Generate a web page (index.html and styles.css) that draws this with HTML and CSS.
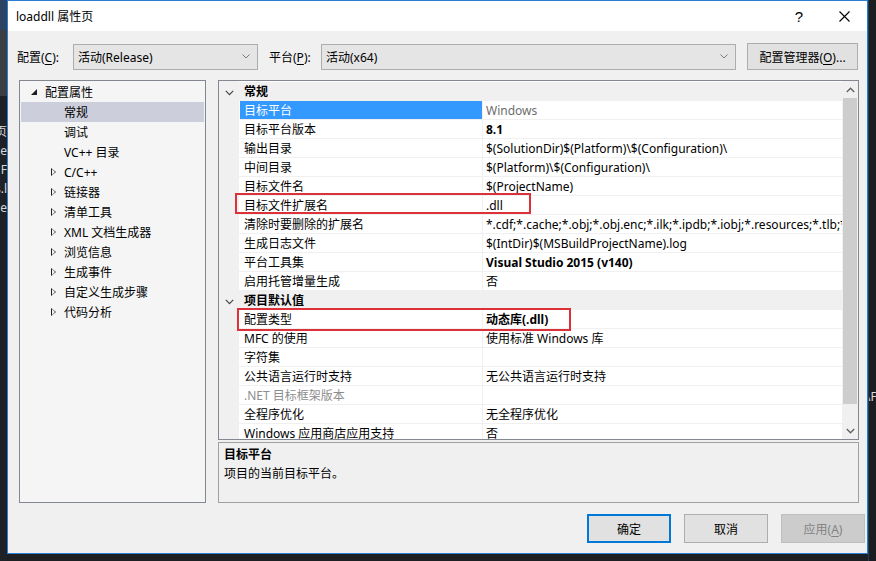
FILE: index.html
```html
<!DOCTYPE html>
<html lang="zh-CN">

<head>
    <meta charset="UTF-8">
    <meta name="viewport" content="width=device-width, initial-scale=1.0">
    <title>loaddll 属性页</title>
    <link rel="stylesheet" href="styles.css">
</head>

<body>
    <div class="screen">
        <div class="backdrop-left">
            <div class="backdrop-top"></div>
            <div class="backdrop-text">
                <span>页</span>
                <span>le</span>
                <span>F</span>
                <span>s.l</span>
                <span>e</span>
            </div>
        </div>

        <div class="dialog">
            <header class="titlebar">
                <span class="title">loaddll 属性页</span>
                <span class="tb-btn help">?</span>
                <span class="tb-btn close">
                    <svg width="11" height="11" viewBox="0 0 11 11"><path d="M0.5 0.5 L10.5 10.5 M10.5 0.5 L0.5 10.5" stroke="#000" stroke-width="1.1" fill="none"/></svg>
                </span>
            </header>

            <div class="config-row">
                <span class="label lbl-config">配置(<u>C</u>):</span>
                <div class="combo combo-config">
                    <span>活动(Release)</span>
                    <svg width="8" height="5" viewBox="0 0 8 5"><path d="M0.5 0.5 L4 4 L7.5 0.5" stroke="#7a7a7a" fill="none"/></svg>
                </div>
                <span class="label lbl-platform">平台(<u>P</u>):</span>
                <div class="combo combo-platform">
                    <span>活动(x64)</span>
                    <svg width="8" height="5" viewBox="0 0 8 5"><path d="M0.5 0.5 L4 4 L7.5 0.5" stroke="#7a7a7a" fill="none"/></svg>
                </div>
                <button class="btn btn-manager">配置管理器(<u>O</u>)...</button>
            </div>

            <div class="main">
                <ul class="tree">
                    <li class="node lvl0">
                        <span class="exp"><svg width="6" height="6" viewBox="0 0 6 6"><polygon points="6,0 6,6 0,6" fill="#1e1e1e"/></svg></span>
                        配置属性
                    </li>
                    <li class="node lvl1 selected"><span class="exp"></span>常规</li>
                    <li class="node lvl1"><span class="exp"></span>调试</li>
                    <li class="node lvl1"><span class="exp"></span>VC++ 目录</li>
                    <li class="node lvl1"><span class="exp closed"></span>C/C++</li>
                    <li class="node lvl1"><span class="exp closed"></span>链接器</li>
                    <li class="node lvl1"><span class="exp closed"></span>清单工具</li>
                    <li class="node lvl1"><span class="exp closed"></span>XML 文档生成器</li>
                    <li class="node lvl1"><span class="exp closed"></span>浏览信息</li>
                    <li class="node lvl1"><span class="exp closed"></span>生成事件</li>
                    <li class="node lvl1"><span class="exp closed"></span>自定义生成步骤</li>
                    <li class="node lvl1"><span class="exp closed"></span>代码分析</li>
                </ul>

                <div class="side">
                    <div class="grid">
                        <div class="rows">
                            <div class="row category">
                                <span class="gutter"><svg width="9" height="6" viewBox="0 0 9 6"><path d="M0.8 0.8 L4.5 4.6 L8.2 0.8" stroke="#444" stroke-width="1.2" fill="none"/></svg></span>
                                <span class="name">常规</span>
                            </div>
                            <div class="row selected">
                                <span class="gutter"></span><span class="name">目标平台</span><span class="value muted">Windows</span>
                            </div>
                            <div class="row">
                                <span class="gutter"></span><span class="name">目标平台版本</span><span class="value bold">8.1</span>
                            </div>
                            <div class="row">
                                <span class="gutter"></span><span class="name">输出目录</span><span class="value">$(SolutionDir)$(Platform)\$(Configuration)\</span>
                            </div>
                            <div class="row">
                                <span class="gutter"></span><span class="name">中间目录</span><span class="value">$(Platform)\$(Configuration)\</span>
                            </div>
                            <div class="row">
                                <span class="gutter"></span><span class="name">目标文件名</span><span class="value">$(ProjectName)</span>
                            </div>
                            <div class="row">
                                <span class="gutter"></span><span class="name">目标文件扩展名</span><span class="value">.dll</span>
                                <span class="mark mark-ext"></span>
                            </div>
                            <div class="row">
                                <span class="gutter"></span><span class="name">清除时要删除的扩展名</span><span class="value">*.cdf;*.cache;*.obj;*.obj.enc;*.ilk;*.ipdb;*.iobj;*.resources;*.tlb;*.tli;*.tlh;*.tmp;*.rsp;*.pgc;*.pgd</span>
                            </div>
                            <div class="row">
                                <span class="gutter"></span><span class="name">生成日志文件</span><span class="value">$(IntDir)$(MSBuildProjectName).log</span>
                            </div>
                            <div class="row">
                                <span class="gutter"></span><span class="name">平台工具集</span><span class="value bold">Visual Studio 2015 (v140)</span>
                            </div>
                            <div class="row">
                                <span class="gutter"></span><span class="name">启用托管增量生成</span><span class="value">否</span>
                            </div>
                            <div class="row category">
                                <span class="gutter"><svg width="9" height="6" viewBox="0 0 9 6"><path d="M0.8 0.8 L4.5 4.6 L8.2 0.8" stroke="#444" stroke-width="1.2" fill="none"/></svg></span>
                                <span class="name">项目默认值</span>
                            </div>
                            <div class="row">
                                <span class="gutter"></span><span class="name">配置类型</span><span class="value bold">动态库(.dll)</span>
                                <span class="mark mark-type"></span>
                            </div>
                            <div class="row">
                                <span class="gutter"></span><span class="name">MFC 的使用</span><span class="value">使用标准 Windows 库</span>
                            </div>
                            <div class="row">
                                <span class="gutter"></span><span class="name">字符集</span><span class="value"></span>
                            </div>
                            <div class="row">
                                <span class="gutter"></span><span class="name">公共语言运行时支持</span><span class="value">无公共语言运行时支持</span>
                            </div>
                            <div class="row">
                                <span class="gutter"></span><span class="name muted">.NET 目标框架版本</span><span class="value"></span>
                            </div>
                            <div class="row">
                                <span class="gutter"></span><span class="name">全程序优化</span><span class="value">无全程序优化</span>
                            </div>
                            <div class="row">
                                <span class="gutter"></span><span class="name">Windows 应用商店应用支持</span><span class="value">否</span>
                            </div>
                        </div>
                        <div class="scrollbar">
                            <span class="arrow"><svg width="9" height="6" viewBox="0 0 9 6"><path d="M0.8 5 L4.5 1.2 L8.2 5" stroke="#606060" stroke-width="1.3" fill="none"/></svg></span>
                            <span class="thumb"></span>
                            <span class="arrow"><svg width="9" height="6" viewBox="0 0 9 6"><path d="M0.8 1 L4.5 4.8 L8.2 1" stroke="#606060" stroke-width="1.3" fill="none"/></svg></span>
                        </div>
                    </div>

                    <div class="desc">
                        <div class="desc-title">目标平台</div>
                        <div class="desc-text">项目的当前目标平台。</div>
                    </div>
                </div>
            </div>

            <div class="actions">
                <button class="btn default">确定</button>
                <button class="btn">取消</button>
                <button class="btn disabled">应用(<u>A</u>)</button>
            </div>
        </div>

        <div class="backdrop-right">
            <span>\F</span>
        </div>
    </div>
</body>

</html>
```

FILE: styles.css
```css
*,
*::after,
*::before {
    box-sizing: border-box;
}

html,
body {
    margin: 0;
    padding: 0;
}

body {
    width: 876px;
    height: 561px;
    overflow: hidden;
    background: #1d1f23;
    font-family: "Noto Sans", "Noto Sans CJK SC", sans-serif;
    font-size: 12px;
    color: #000;
}

.screen {
    display: flex;
    height: 561px;
}

.backdrop-left {
    width: 7px;
    flex: none;
    overflow: hidden;
    background: #1e2126;

    .backdrop-top {
        height: 96px;
        background: linear-gradient(#2c4462 0 30px, #3a3d42 30px 96px);
    }

    .backdrop-text {
        display: flex;
        flex-direction: column;
        align-items: flex-end;
        padding-top: 26px;
        color: #d8d8d8;
        line-height: 19px;

        span {
            white-space: nowrap;
        }
    }
}

.backdrop-right {
    flex: 1;
    overflow: hidden;
    background: #1b1d21;
    border-left: 1px solid #1f3d5e;
    color: #d8d8d8;

    span {
        display: block;
        margin-top: 388px;
        margin-left: -3px;
        white-space: nowrap;
    }
}

.dialog {
    width: 861px;
    height: 554px;
    flex: none;
    display: flex;
    flex-direction: column;
    background: #f0f0f0;
    border: 1px solid #2b7cd3;
}

.titlebar {
    display: flex;
    align-items: center;
    height: 30px;
    background: #fff;
    padding-left: 8px;

    .title {
        flex: 1;
    }

    .tb-btn {
        display: flex;
        align-items: center;
        justify-content: center;
        width: 46px;
        height: 30px;
    }

    .help {
        font-size: 15px;
        font-family: "Liberation Sans", sans-serif;
    }

    .close {
        width: 45px;
    }
}

u {
    text-decoration: underline;
    text-underline-offset: 2px;
}

.config-row {
    display: flex;
    align-items: center;
    height: 27px;
    margin-top: 12px;
    padding-left: 9px;

    .label {
        flex: none;
    }

    .lbl-config {
        width: 56px;
    }

    .lbl-platform {
        width: 52px;
        margin-left: 11px;
    }
}

.combo {
    display: flex;
    align-items: center;
    justify-content: space-between;
    height: 26px;
    padding: 0 7px 0 4px;
    background: #e5e5e5;
    border: 1px solid #adadad;

    svg {
        flex: none;
    }
}

.combo-config {
    width: 185px;
}

.combo-platform {
    width: 415px;
}

.btn {
    font: inherit;
    color: #000;
    background: #e1e1e1;
    border: 1px solid #adadad;
    padding: 0;
    height: 28px;
}

.btn-manager {
    width: 111px;
    height: 27px;
    margin-left: 11px;
}

.main {
    display: flex;
    gap: 12px;
    height: 423px;
    margin-top: 10px;
    padding-left: 11px;
}

.tree {
    list-style: none;
    margin: 0;
    width: 187px;
    padding: 1px 1px 0;
    background: #f5f5f5;
    border: 1px solid #828790;

    .node {
        display: flex;
        align-items: center;
        height: 20px;
        white-space: nowrap;
    }

    .lvl0 {
        padding-left: 10px;
    }

    .lvl1 {
        padding-left: 30px;
    }

    .exp {
        display: flex;
        align-items: center;
        width: 14px;
        height: 18px;
        flex: none;
    }

    .lvl1 .exp {
        width: 13px;
    }

    .exp.closed::before {
        content: "";
        width: 0;
        height: 0;
        border-left: 5px solid #1e1e1e;
        border-top: 4.5px solid transparent;
        border-bottom: 4.5px solid transparent;
    }

    .exp.closed::after {
        content: "";
        position: relative;
        left: -4px;
        width: 0;
        height: 0;
        border-left: 3.5px solid #f5f5f5;
        border-top: 3.2px solid transparent;
        border-bottom: 3.2px solid transparent;
    }

    .selected {
        background: #cccedb;
    }
}

.side {
    display: flex;
    flex-direction: column;
    gap: 2px;
    width: 641px;
}

.grid {
    display: flex;
    height: 361px;
    background: #fff;
    border: 1px solid #828790;
    overflow: hidden;

    .rows {
        flex: 1;
        overflow: hidden;
        padding-top: 1px;
        background: linear-gradient(90deg, #f0f0f0 0 20px, transparent 20px);
    }

    .row {
        position: relative;
        display: grid;
        grid-template-columns: 20px 244px 1fr;
        height: 19px;
        line-height: 20px;

        .gutter {
            display: flex;
            align-items: center;
            justify-content: center;
            background: #f0f0f0;
        }

        .name {
            padding-left: 5px;
            border-bottom: 1px solid #f0f0f0;
            border-right: 1px solid #f0f0f0;
            white-space: nowrap;
            overflow: hidden;
        }

        .value {
            padding-left: 3px;
            border-bottom: 1px solid #f0f0f0;
            white-space: nowrap;
            overflow: hidden;
        }
    }

    .row.category {
        background: #f0f0f0;

        .gutter {
            padding-top: 2px;
        }

        .name {
            grid-column: 2 / 4;
            font-weight: 700;
            border: 0;
        }
    }

    .row.selected .name {
        background: #3399ff;
        color: #fff;
        margin-left: 1px;
        padding-left: 4px;
    }

    .muted {
        color: #6d6d6d;
    }

    .name.muted {
        color: #8d8d8d;
    }

    .bold {
        font-weight: 700;
    }

    .mark {
        position: absolute;
        z-index: 1;
        border: 2px solid #dc3139;
    }

    .mark-ext {
        left: 16px;
        top: -3px;
        width: 296px;
        height: 21px;
    }

    .mark-type {
        left: 18px;
        top: -2px;
        width: 334px;
        height: 23px;
    }
}

.scrollbar {
    display: flex;
    flex-direction: column;
    width: 16px;
    flex: none;
    background: #f0f0f0;

    .arrow {
        display: flex;
        align-items: center;
        justify-content: center;
        height: 17px;
        flex: none;
    }

    .thumb {
        height: 306px;
        margin: 0 1px;
        background: #cdcdcd;
    }

    .thumb + .arrow {
        margin-top: auto;
    }
}

.desc {
    height: 61px;
    padding: 2px 5px;
    border: 1px solid #a0a0a0;
    background: #f0f0f0;
    line-height: 19px;

    .desc-title {
        font-weight: 700;
    }
}

.actions {
    display: flex;
    justify-content: flex-end;
    gap: 13px;
    margin-top: 11px;
    padding-right: 2px;

    .btn {
        width: 84px;
        height: 29px;
    }

    .default {
        border: 2px solid #0078d7;
    }

    .disabled {
        background: #cccccc;
        border-color: #bfbfbf;
        color: #838383;
    }
}
```
